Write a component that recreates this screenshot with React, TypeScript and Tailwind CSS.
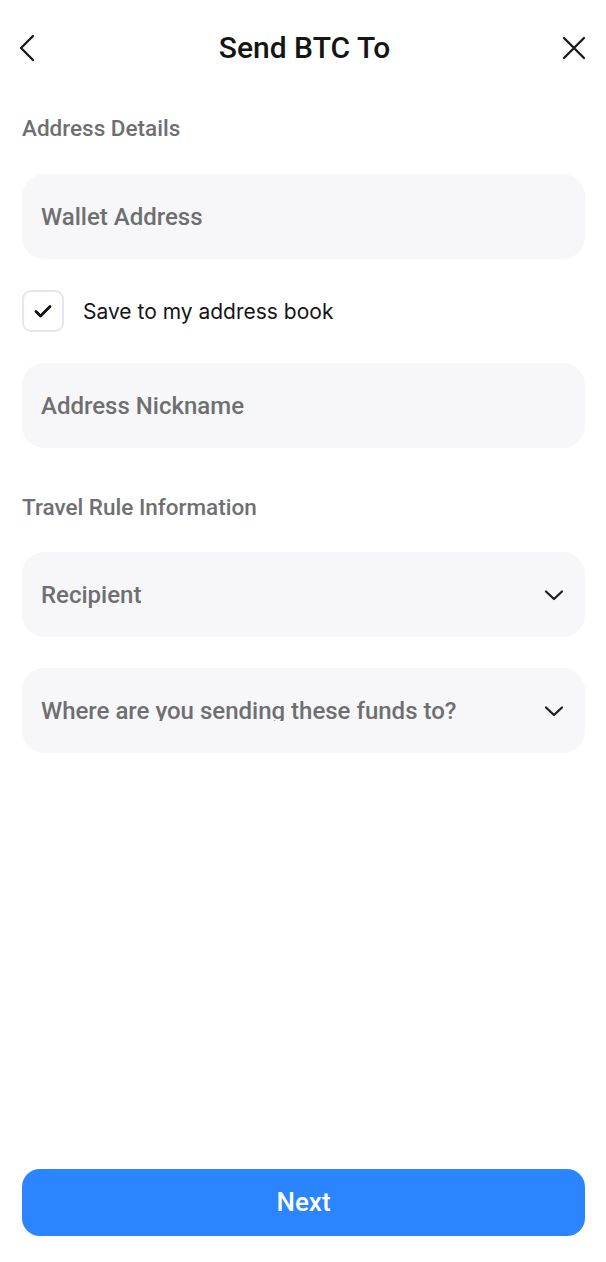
import React from "react";

const Chevron = () => (
  <svg width="24" height="24" viewBox="0 0 24 24" fill="none" stroke="#1c1c1e" strokeWidth="2.2" strokeLinecap="round" strokeLinejoin="round">
    <path d="M4 8.5l8 7.5 8-7.5" />
  </svg>
);

const Field = ({ label, select, clip }: { label: string; select?: boolean; clip?: boolean }) => (
  <div className="flex h-[85px] items-center justify-between rounded-[22px] bg-[#f7f7f9] pl-[19px] pr-[19px]">
    <div className="h-[28px]">
      <span
        className={
          clip
            ? "block h-[24px] overflow-hidden text-[24px] font-medium leading-[28px] text-[#6f6f72]"
            : "block text-[24px] font-medium leading-[28px] text-[#6f6f72]"
        }
      >
        {label}
      </span>
    </div>
    {select && <Chevron />}
  </div>
);

export default function App() {
  return (
    <div
      className="flex h-[1262px] w-[606px] flex-col bg-white pl-[22px] pr-[21px]"
      style={{ fontFamily: "Roboto, 'Liberation Sans', sans-serif" }}
    >
      <div className="flex h-[94px] items-center justify-between pt-[2px]">
        <div className="flex w-[40px] justify-start">
          <svg width="24" height="30" viewBox="0 0 24 30" fill="none" stroke="#1c1c1e" strokeWidth="2.4" strokeLinecap="round" strokeLinejoin="round" className="-ml-[4px]">
            <path d="M15 3L3 15l12 12" />
          </svg>
        </div>
        <h1 className="ml-[2px] text-[30px] font-medium leading-[34px] text-[#151515]">Send BTC To</h1>
        <div className="flex w-[40px] justify-end">
          <svg width="26" height="26" viewBox="0 0 26 26" fill="none" stroke="#1c1c1e" strokeWidth="2.4" strokeLinecap="round" className="-mr-[2px]">
            <path d="M3 3l20 20M23 3L3 23" />
          </svg>
        </div>
      </div>

      <div className="mt-[20px] text-[22.5px] font-medium leading-[28px] text-[#6f6f72]">Address Details</div>

      <div className="mt-[32px]">
        <Field label="Wallet Address" />
      </div>

      <div className="mt-[31px] flex items-center gap-[19px]">
        <div className="flex h-[42px] w-[42px] items-center justify-center rounded-[9px] border-2 border-[#e7e5f0] bg-white">
          <svg width="22" height="22" viewBox="0 0 22 22" fill="none" stroke="#111" strokeWidth="2.8" strokeLinecap="round" strokeLinejoin="round">
            <path d="M4 11.5l4.5 4.5L18 6.5" />
          </svg>
        </div>
        <span className="pt-[2px] text-[21px] text-[#151515]" style={{ fontFamily: "Inter, Roboto, sans-serif" }}>
          Save to my address book
        </span>
      </div>

      <div className="mt-[31px]">
        <Field label="Address Nickname" />
      </div>

      <div className="mt-[45px] text-[22.5px] font-medium leading-[28px] text-[#6f6f72]">Travel Rule Information</div>

      <div className="mt-[31px]">
        <Field label="Recipient" select />
      </div>
      <div className="mt-[31px]">
        <Field label="Where are you sending these funds to?" select clip />
      </div>

      <div className="flex-1" />

      <button className="mb-[26px] flex h-[67px] items-center justify-center rounded-[18px] bg-[#2a85ff] text-[26px] font-medium text-white">
        Next
      </button>
    </div>
  );
}
